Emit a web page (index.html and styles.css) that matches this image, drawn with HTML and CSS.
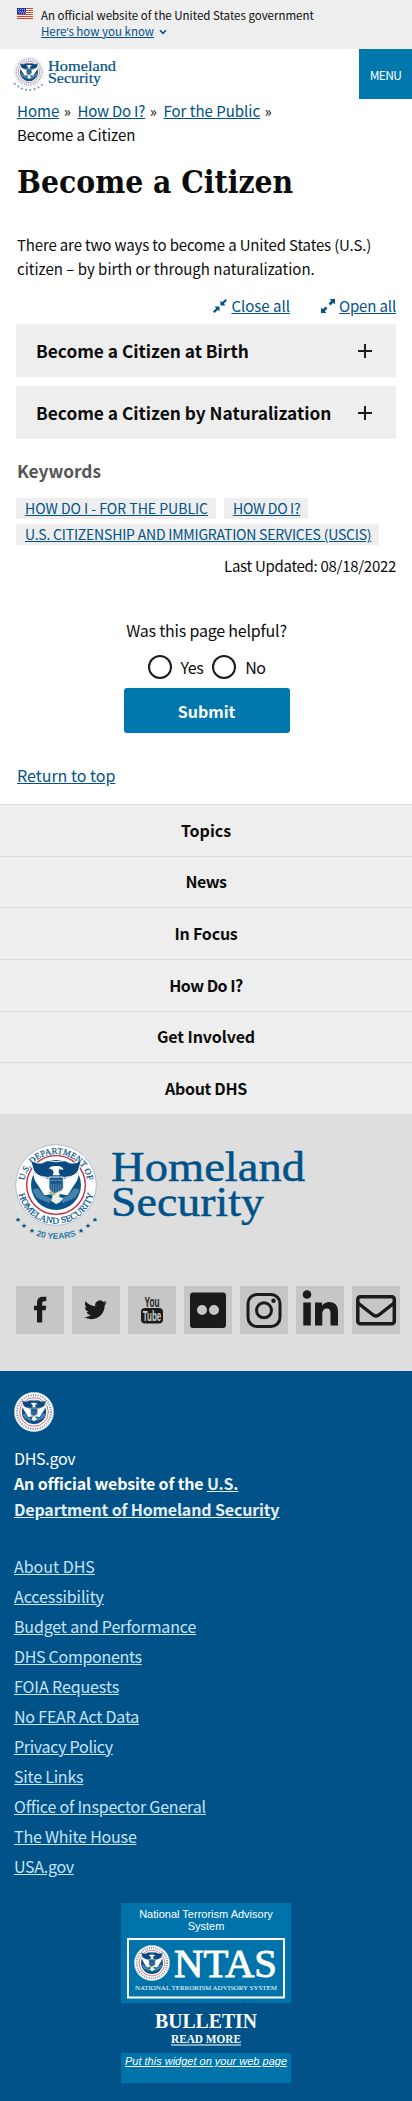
FILE: index.html
```html
<!DOCTYPE html>
<html lang="en">
<head>
<meta charset="utf-8">
<title>Become a Citizen | Homeland Security</title>
<link rel="stylesheet" href="styles.css">
</head>
<body>
<svg class="defs" aria-hidden="true">
  <symbol id="seal" viewBox="0 0 246 246">
    <circle cx="123" cy="123" r="121" fill="#fff" stroke="#aebfd2" stroke-width="3"/>
    <circle cx="123" cy="123" r="88" fill="#fff" stroke="#c8203c" stroke-width="4"/>
    <circle cx="123" cy="123" r="75" fill="#0b5289"/>
    <path d="M47 50C62 58 80 60 89 53C98 47 110 53 123 53C136 53 148 47 157 53C166 60 184 58 199 50L190 80L170 103L160 98L123 108L86 98L76 103L56 80Z" fill="#0b4a80" stroke="#fff" stroke-width="3"/>
    <path d="M52 84L105 108L112 150L88 154L72 128L60 110Z" fill="#fff"/>
    <path d="M194 84L141 108L134 150L158 154L174 128L186 110Z" fill="#fff"/>
    <path d="M52 140Q67 120 85 154L110 164L103 178L67 162ZM194 140Q179 120 161 154L136 164L143 178L179 162Z" fill="#4681ad"/>
    <path d="M102 99H145V132Q140 147 123 153Q106 147 102 132Z" fill="#16548a" stroke="#e9f0f6" stroke-width="3"/>
    <path d="M103 109H144M109 119V140M116 119V148M123 119V151M130 119V148M137 119V140" stroke="#88aac7" stroke-width="2"/>
    <path d="M101 73Q110 64 123 66Q140 64 146 77L132 76Q128 85 135 94H112Q119 85 112 77Z" fill="#fff"/>
    <path d="M96 137L121 148L139 138L132 158L145 163L133 176L123 180L108 170L113 155Z" fill="#e8eee0"/>
    <path d="M100 144L116 143L122 153L109 153Z" fill="#a8b86b"/>
  </symbol>
  <symbol id="ring" viewBox="0 0 246 246">
    <circle cx="123" cy="123" r="104" fill="none" stroke="#8794ad" stroke-width="13" stroke-dasharray="7 8"/>
  </symbol>
</svg>

<div class="banner">
  <svg class="flag" viewBox="0 0 16 11"><path fill="#fff" d="M0 0h16v11H0z"/><path d="M0 .5h16M0 2.5h16M0 4.5h16M0 6.5h16M0 8.5h16M0 10.5h16" stroke="#db3e1f"/><path fill="#1e33b1" d="M0 0h9v6H0z"/><path d="M1 1.5h8M1 3.5h8M2 5h7" stroke="#fff" stroke-width=".7" stroke-dasharray="1 1"/></svg>
  <div class="banner-text">
    <p>An official website of the United States government</p>
    <p><a href="#">Here<span class="apos">’</span>s how you know</a><svg class="chev" viewBox="0 0 8 6"><path d="M1 1.3L4 4.3L7 1.3" fill="none" stroke="#005288" stroke-width="1.6"/></svg></p>
  </div>
</div>

<header class="header">
  <svg class="logo" viewBox="0 0 110 42">
    <use href="#seal" x="1" y="1" width="30" height="30"/><use href="#ring" x="1" y="1" width="30" height="30"/>
    <path d="M1 27Q16 41 31 27" fill="none" stroke="#88a9c6" stroke-width="2" stroke-dasharray="2 2.3"/>
    <text x="35" y="14.500" textLength="68" lengthAdjust="spacingAndGlyphs">Homeland</text>
    <text x="35" y="27" textLength="53" lengthAdjust="spacingAndGlyphs">Security</text>
  </svg>
  <button class="menu">MENU</button>
</header>

<main class="main">
  <nav class="crumbs">
    <div><a href="#">Home</a><i>»</i><a class="ls2" href="#">How Do I?</a><i>»</i><a href="#">For the Public</a><i>»</i></div>
    <div class="ls1">Become a Citizen</div>
  </nav>
  <h1>Become a Citizen</h1>
  <p class="intro"><span class="ls15">There are two ways to become a United States (U.S.)</span><br>citizen – by birth or through naturalization.</p>
  <div class="toggle-all">
    <a href="#"><svg viewBox="0 0 14 14"><path d="M7.500 1.500V6.500H12.500L10.800 4.800L14 1.600L12.400 0L9.200 3.200ZM6.500 12.500V7.500H1.500L3.200 9.200L0 12.400L1.600 14L4.800 10.800Z"/></svg><span>Close all</span></a>
    <a href="#"><svg viewBox="0 0 14 14"><path d="M8.500 0H14V5.500L12.200 3.700L9.500 6.400L7.600 4.500L10.300 1.800ZM5.500 14H0V8.500L1.800 10.300L4.500 7.600L6.400 9.500L3.700 12.200Z"/></svg><span class="ls15">Open all</span></a>
  </div>
  <section class="accordion">
    <h2>Become a Citizen at Birth<svg viewBox="0 0 14 14"><path d="M7 0V14M0 7H14"/></svg></h2>
    <h2>Become a Citizen by Naturalization<svg viewBox="0 0 14 14"><path d="M7 0V14M0 7H14"/></svg></h2>
  </section>
  <h3>Keywords</h3>
  <ul class="tags">
    <li><a href="#">HOW DO I - FOR THE PUBLIC</a></li>
    <li><a class="ls3" href="#">HOW DO I?</a></li>
    <li><a class="ls2" href="#">U.S. CITIZENSHIP AND IMMIGRATION SERVICES (USCIS)</a></li>
  </ul>
  <p class="updated ls3">Last Updated: 08/18/2022</p>
  <form class="survey">
    <p class="ls2">Was this page helpful?</p>
    <div class="radios"><b></b><span class="ls5">Yes</span><b></b><span class="ls5">No</span></div>
    <button type="button">Submit</button>
  </form>
  <p class="return"><a href="#">Return to top</a></p>
</main>

<footer>
  <nav class="foot-nav">
    <a href="#">Topics</a><a class="ls5" href="#">News</a><a class="ls2" href="#">In Focus</a><a class="ls5" href="#">How Do I?</a><a class="ls1" href="#">Get Involved</a><a class="ls3" href="#">About DHS</a>
  </nav>
  <div class="brand">
    <svg class="brand-logo" viewBox="0 0 300 108">
      <use href="#seal" x="1" y="1" width="82" height="82"/>
      <path id="arcTop" d="M10.500 37.400A32 32 0 0 1 73.500 37.400" fill="none"/>
      <path id="arcBottom" d="M4.600 51.300A38.500 38.500 0 0 0 79.400 51.300" fill="none"/>
      <g class="seal-text"><text textLength="89" lengthAdjust="spacingAndGlyphs"><textPath href="#arcTop" textLength="88" lengthAdjust="spacingAndGlyphs">U.S. DEPARTMENT OF</textPath></text>
      <text textLength="103" lengthAdjust="spacingAndGlyphs"><textPath href="#arcBottom" textLength="103" lengthAdjust="spacingAndGlyphs">HOMELAND SECURITY</textPath></text></g>
      <path id="arcYears" d="M20 92Q42 100 64 92" fill="none"/>
      <text class="years"><textPath href="#arcYears" startOffset="50%">20 YEARS</textPath></text>
      <g class="stars"><text x="4" y="79">★</text><text x="10" y="85">★</text><text x="18" y="90">★</text><text x="67" y="90">★</text><text x="74" y="85">★</text><text x="81" y="79">★</text></g>
      <g class="brand-name"><text x="97" y="37.500" textLength="194" lengthAdjust="spacingAndGlyphs">Homeland</text><text x="97" y="73" textLength="153" lengthAdjust="spacingAndGlyphs">Security</text></g>
    </svg>
    <div class="social">
      <a href="#"><svg viewBox="0 0 48 48"><path d="M30.300 10.800V15.200H28Q26.200 15.200 26.200 17V19.800H30.200L29.700 24.200H26.200V36.500H21V24.200H18V19.800H21V16.600Q21 10.800 27 10.800Z"/></svg></a>
      <a href="#"><svg viewBox="0 0 48 48"><path transform="translate(12 12.300) scale(.96)" d="M23.950 4.570a10 10 0 0 1-2.820.78 4.960 4.960 0 0 0 2.160-2.730c-.95.560-2 .960-3.130 1.190a4.920 4.920 0 0 0-8.380 4.480C7.690 8.100 4.070 6.130 1.640 3.160a4.820 4.820 0 0 0-.67 2.480c0 1.710.87 3.210 2.190 4.100a4.900 4.900 0 0 1-2.230-.62v.06a4.920 4.920 0 0 0 3.950 4.830 5 5 0 0 1-2.210.08 4.940 4.940 0 0 0 4.600 3.420A9.870 9.870 0 0 1 0 19.540a14 14 0 0 0 7.550 2.210c9.050 0 14-7.500 14-13.980 0-.21 0-.42-.02-.63a9.940 9.940 0 0 0 2.420-2.570z"/></svg></a>
      <a href="#"><svg class="yt" viewBox="0 0 48 48"><text x="16.500" y="20.500" textLength="15" lengthAdjust="spacingAndGlyphs">You</text><rect x="13" y="22" width="22" height="15.500" rx="4"/><text class="tube" x="14.800" y="35" textLength="18.500" lengthAdjust="spacingAndGlyphs">Tube</text></svg></a>
      <a href="#"><svg viewBox="0 0 48 48"><path fill-rule="evenodd" d="M9 6.500H39Q42 6.500 42 9.500V39Q42 42 39 42H9Q6 42 6 39V9.500Q6 6.500 9 6.500ZM18 19A5 5 0 1 0 18 29A5 5 0 1 0 18 19ZM30 19A5 5 0 1 0 30 29A5 5 0 1 0 30 19Z"/></svg></a>
      <a href="#"><svg viewBox="0 0 48 48"><g fill="none" stroke="#1b1b1b" stroke-width="3"><rect x="8" y="8.500" width="32" height="32" rx="9"/><circle cx="24" cy="24.300" r="7.500"/></g><circle cx="33.500" cy="14.800" r="2.200"/></svg></a>
      <a href="#"><svg viewBox="0 0 48 48"><circle cx="11" cy="8.500" r="4.300"/><path d="M7.300 16.500H14.800V39.500H7.300ZM19 16.500H26V19.700Q28.500 16 33.500 16Q42 16 42 26V39.500H34.500V27.500Q34.500 22.500 31 22.500Q26.300 22.500 26.300 28V39.500H19Z"/></svg></a>
      <a href="#"><svg viewBox="0 0 48 48"><g fill="none" stroke="#1b1b1b" stroke-width="3.500" stroke-linejoin="round"><rect x="5.800" y="10.800" width="36.500" height="27" rx="2.500"/><path d="M6 17L20.500 28.500Q24 31.500 27.500 28.500L42 17"/></g></svg></a>
    </div>
  </div>
  <div class="legal">
    <svg class="small-seal" viewBox="0 0 246 246"><use href="#seal"/><use href="#ring"/></svg>
    <p class="site ls3">DHS.gov</p>
    <p class="about ls15">An official website of the <a href="#">U.S.<br>Department of Homeland Security</a></p>
    <ul class="links">
      <li><a href="#">About DHS</a></li><li><a class="ls1" href="#">Accessibility</a></li><li><a class="ls15" href="#">Budget and Performance</a></li><li><a class="ls3" href="#">DHS Components</a></li><li><a class="ls1" href="#">FOIA Requests</a></li><li><a class="ls2" href="#">No FEAR Act Data</a></li><li><a class="ls3" href="#">Privacy Policy</a></li><li><a class="ls2" href="#">Site Links</a></li><li><a class="ls2" href="#">Office of Inspector General</a></li><li><a class="ls2" href="#">The White House</a></li><li><a class="ls3" href="#">USA.gov</a></li>
    </ul>
    <div class="ntas">
      <div class="ntas-top">
        <p>National Terrorism Advisory<br>System</p>
        <svg viewBox="0 0 158 61"><path d="M1 1H157V59.500H1Z" fill="none" stroke="#fff" stroke-width="2"/><use href="#seal" x="7" y="7" width="36" height="36"/><use href="#ring" x="7" y="7" width="36" height="36"/><text class="big" x="47" y="39" textLength="103" lengthAdjust="spacingAndGlyphs">NTAS</text><text class="tiny" x="8" y="51.500" textLength="142" lengthAdjust="spacingAndGlyphs">NATIONAL TERRORISM ADVISORY SYSTEM</text></svg>
      </div>
      <div class="bulletin"><svg viewBox="0 0 170 50"><text class="b1" x="34" y="25" textLength="102" lengthAdjust="spacingAndGlyphs">BULLETIN</text><text class="b2" x="50" y="40" textLength="70" lengthAdjust="spacingAndGlyphs">READ MORE</text><path d="M50 42H120" stroke="#fff"/></svg></div>
      <div class="widget"><a href="#">Put this widget on your web page</a></div>
    </div>
  </div>
</footer>
</body>
</html>
```
FILE: styles.css
```css
* { box-sizing: border-box; }
body { margin: 0; background: #fff; color: #0c0c0c; font: 15px/24px "Noto Sans CJK SC", "Open Sans", sans-serif; }
p, h1, h2, h3, ul { margin: 0; padding: 0; }
li { list-style: none; }
a { color: #005288; }
svg { display: block; }
.defs { position: absolute; width: 0; height: 0; }
.ls1 { letter-spacing: -.1px; }
.ls15 { letter-spacing: -.15px; }
.ls2 { letter-spacing: -.2px; }
.ls3 { letter-spacing: -.29px; }
.ls5 { letter-spacing: -.5px; }
button { border: 0; padding: 0; font-family: inherit; background: #0078ae; color: #fff; }
.banner { display: flex; gap: 8px; height: 49px; padding: 8px 17px; background: #eee; }
.flag { width: 16px; height: 11px; }
.banner-text { font-size: 11.500px; line-height: 16px; margin-top: -1px; }
.banner-text p { display: flex; align-items: center; gap: 5px; white-space: nowrap; }
.apos { font-family: "Open Sans", sans-serif; }
.chev { width: 8px; height: 6px; }
.header { display: flex; justify-content: space-between; height: 50px; padding-left: 13px; }
.logo { width: 110px; height: 42px; margin-top: 7px; }
.logo text { font: 14px "Liberation Serif", serif; fill: #005288; stroke: #005288; stroke-width: .2; }
.menu { width: 53px; height: 50px; font-size: 12px; letter-spacing: -.7px; }
.main { height: 705px; padding: 0 16px 0 17px; display: flex; flex-direction: column; }
.crumbs { white-space: nowrap; }
.crumbs i { font-style: normal; margin: 0 6.500px 0 4.500px; }
h1 { font: bold 31.500px/40px "DejaVu Serif Condensed", "DejaVu Serif", serif; margin-top: 15px; white-space: nowrap; }
.intro { margin-top: 31px; white-space: nowrap; }
.toggle-all { display: flex; justify-content: flex-end; gap: 31px; margin-top: 13px; }
.toggle-all a { display: flex; align-items: center; gap: 4px; }
.toggle-all svg { width: 14px; height: 14px; fill: #005288; }
.accordion { display: grid; gap: 9px; margin: 6px 0 0 -1px; }
.accordion h2 { display: flex; align-items: center; justify-content: space-between; height: 53px; padding: 0 24px 0 20px; background: #eee; font-size: 17.300px; white-space: nowrap; }
.accordion svg { width: 14px; height: 14px; stroke: #1b1b1b; stroke-width: 2; }
h3 { margin-top: 20px; font-size: 17.250px; color: #565656; }
.tags { display: flex; flex-wrap: wrap; gap: 5px 8px; margin: 15px 0 0 -1px; }
.tags li { background: #eee; height: 21px; padding: 0 8px 0 9px; line-height: 21px; font-size: 14px; white-space: nowrap; }
.updated { text-align: right; margin-top: 9px; }
.survey { display: flex; flex-direction: column; align-items: center; margin-top: 40px; font-size: 16px; }
.radios { display: flex; align-items: center; margin-top: 13px; }
.radios b { width: 24px; height: 24px; border: 2px solid #1b1b1b; border-radius: 50%; margin-right: 9px; }
.radios span + b { margin-left: 9px; }
.survey button { width: 166px; height: 45px; margin-top: 9px; border-radius: 3px; font-size: 16px; font-weight: bold; }
.return { margin-top: 30px; font-size: 16px; }
.foot-nav { display: grid; grid-template-rows: repeat(6, 1fr); height: 310px; background: #eee; }
.foot-nav a { display: flex; align-items: center; justify-content: center; padding-bottom: 1px; border-top: 1px solid #dcdcdc; color: #0c0c0c; font-size: 16px; font-weight: bold; text-decoration: none; }
.brand { height: 257px; padding: 29px 12px 0 14px; background: #dedede; }
.brand-logo { width: 300px; height: 108px; }
.brand-logo text { font-family: "Liberation Serif", serif; fill: #005288; }
.seal-text text { font-size: 9px; stroke: #005288; stroke-width: .2; }
.brand-logo .years { font: bold 8.500px "Liberation Sans", sans-serif; text-anchor: middle; fill: #2c7ba6; }
.brand-logo .stars text { font: 7px "DejaVu Sans", sans-serif; text-anchor: middle; }
.brand-name text { font-size: 43px; stroke: #005288; stroke-width: .5; }
.social { display: flex; gap: 8px; margin: 35px 0 0 2px; }
.social a { width: 48px; height: 48px; background: #c6c6c6; }
.social svg { width: 48px; height: 48px; fill: #1b1b1b; }
.yt text { font: bold 14px "Liberation Sans Narrow", "Liberation Sans", sans-serif; }
.yt .tube { fill: #d0d0d0; }
.legal { height: 730px; padding: 21px 14px 0; background: #005288; color: #fff; font-size: 16px; }
.small-seal { width: 40px; height: 40px; }
.site { margin-top: 14px; }
.about { font-weight: bold; line-height: 26px; white-space: nowrap; }
.about a { color: #e4eef6; }
.links { margin-top: 29px; line-height: 30px; }
.links a { color: #c8e4f8; }
.ntas { width: 170px; margin: 22px auto 0 107px; font: 11px/12px "Liberation Sans", sans-serif; text-align: center; }
.ntas-top { height: 100px; padding: 5px 6px 0; background: #0073aa; }
.ntas-top p { white-space: nowrap; }
.ntas-top svg { width: 158px; height: 61px; margin-top: 6px; }
.ntas text { font-family: "Liberation Serif", serif; fill: #fff; }
.ntas .big { font-size: 40px; stroke: #fff; stroke-width: 1; }
.ntas .tiny { font-size: 7px; }
.bulletin svg { width: 170px; height: 50px; }
.ntas .b1 { font-size: 21px; font-weight: bold; }
.ntas .b2 { font-size: 13px; font-weight: bold; }
.widget { height: 30px; padding-top: 2px; background: #0073aa; font-style: italic; white-space: nowrap; }
.widget a { color: #fff; }
```
